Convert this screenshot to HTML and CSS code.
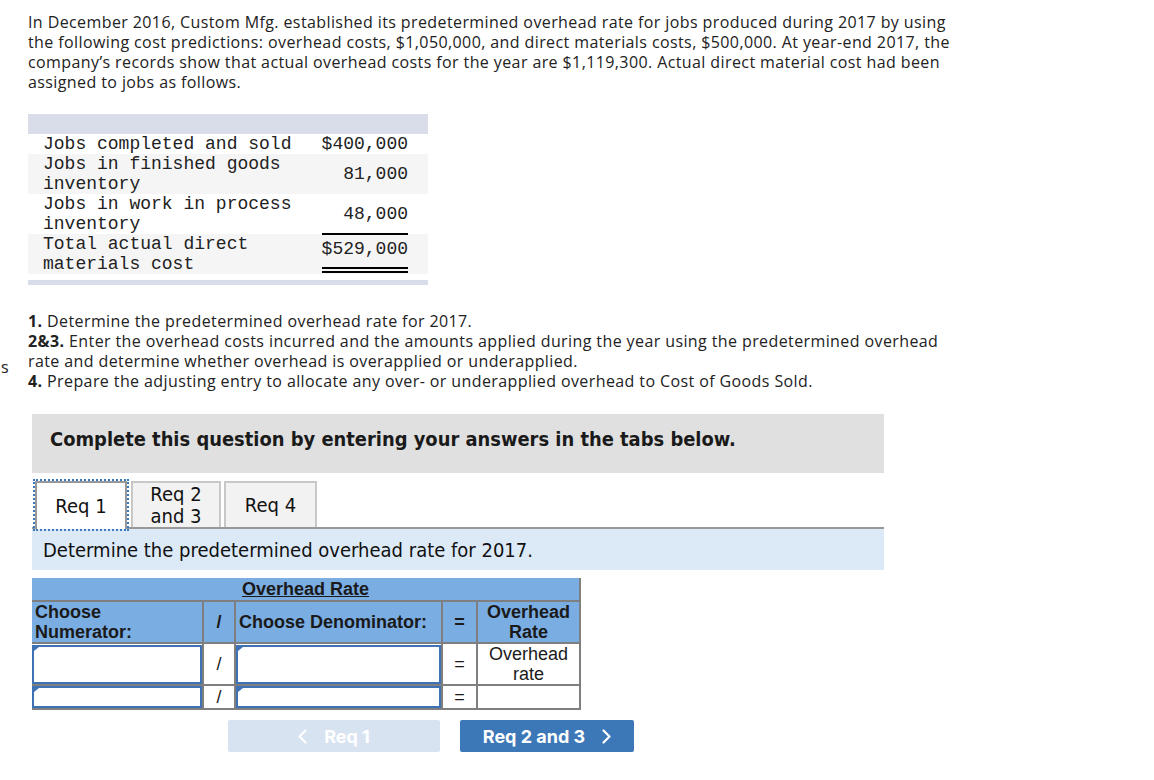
FILE: index.html
```html
<!DOCTYPE html>
<html lang="en">
<head>
<meta charset="utf-8">
<title>Predetermined overhead rate</title>
<link rel="stylesheet" href="styles.css">
</head>
<body>
<div class="page">
  <p class="intro">In December 2016, Custom Mfg. established its predetermined overhead rate for jobs produced during 2017 by using<br>the following cost predictions: overhead costs, $1,050,000, and direct materials costs, $500,000. At year-end 2017, the<br>company’s records show that actual overhead costs for the year are $1,119,300. Actual direct material cost had been<br>assigned to jobs as follows.</p>

  <table class="costs">
    <thead><tr><th colspan="2"></th></tr></thead>
    <tbody>
      <tr><td class="lbl">Jobs completed and sold</td><td class="val">$400,000</td></tr>
      <tr class="alt"><td class="lbl">Jobs in finished goods inventory</td><td class="val">81,000</td></tr>
      <tr><td class="lbl">Jobs in work in process inventory</td><td class="val">48,000</td></tr>
      <tr class="alt"><td class="lbl">Total actual direct materials cost</td><td class="val"><span class="total">$529,000</span></td></tr>
    </tbody>
    <tfoot><tr><td colspan="2"></td></tr></tfoot>
  </table>

  <div class="questions">
    <span class="stray">s</span>
    <div class="qtext">
      <p><b>1.</b> Determine the predetermined overhead rate for 2017.</p>
      <p><b>2&amp;3.</b> Enter the overhead costs incurred and the amounts applied during the year using the predetermined overhead<br>rate and determine whether overhead is overapplied or underapplied.</p>
      <p><b>4.</b> Prepare the adjusting entry to allocate any over- or underapplied overhead to Cost of Goods Sold.</p>
    </div>
  </div>

  <div class="quiz">
    <div class="prompt">Complete this question by entering your answers in the tabs below.</div>
    <div class="tabs">
      <div class="tab t1 active">Req 1</div>
      <div class="tab t2">Req 2<br>and 3</div>
      <div class="tab t3">Req 4</div>
    </div>
    <div class="instruction">Determine the predetermined overhead rate for 2017.</div>

    <table class="rate">
      <tr class="head"><th colspan="5"><u>Overhead Rate</u></th></tr>
      <tr class="cols">
        <th class="c1 left">Choose<br>Numerator:</th>
        <th class="c2">/</th>
        <th class="c3 left">Choose Denominator:</th>
        <th class="c4">=</th>
        <th class="c5">Overhead<br>Rate</th>
      </tr>
      <tr class="r1">
        <td class="in"><div class="box"></div></td>
        <td>/</td>
        <td class="in"><div class="box"></div></td>
        <td>=</td>
        <td>Overhead<br>rate</td>
      </tr>
      <tr class="r2">
        <td class="in"><div class="box"></div></td>
        <td>/</td>
        <td class="in"><div class="box"></div></td>
        <td>=</td>
        <td></td>
      </tr>
    </table>

    <div class="nav">
      <button class="btn prev"><svg class="chev" width="9" height="15" viewBox="0 0 9 15"><path d="M7.5 1.5 L1.5 7.5 L7.5 13.5" fill="none" stroke="#fff" stroke-width="2.2" stroke-linecap="round" stroke-linejoin="round"/></svg>Req 1</button>
      <button class="btn next">Req 2 and 3<svg class="chev" width="9" height="15" viewBox="0 0 9 15"><path d="M1.5 1.5 L7.5 7.5 L1.5 13.5" fill="none" stroke="#fff" stroke-width="2.2" stroke-linecap="round" stroke-linejoin="round"/></svg></button>
    </div>
  </div>
</div>
</body>
</html>
```

FILE: styles.css
```css
body {
  margin: 0;
  background: #ffffff;
  color: #1f1f1f;
}
.page {
  width: 1154px;
}
.intro {
  margin: 12px 0 0 28px;
  font-family: "Open Sans", "Liberation Sans", sans-serif;
  font-size: 16px;
  letter-spacing: 0.4px;
  line-height: 20px;
  color: #222;
}

/* cost table */
.costs {
  margin: 22px 0 0 28px;
  width: 400px;
  border-collapse: separate;
  border-spacing: 0;
  font-family: "Liberation Mono", monospace;
  font-size: 18px;
  line-height: 20px;
  color: #222;
}
.costs thead th {
  height: 20px;
  padding: 0;
  background: #d9dde9;
}
.costs td {
  padding: 0;
  vertical-align: middle;
}
.costs .lbl {
  width: 257px;
  padding-left: 15px;
}
.costs .val {
  text-align: right;
  padding-right: 20px;
}
.costs .alt td {
  background: #f5f5f5;
}
.costs .total {
  display: inline-block;
  border-top: 2px solid #000;
  border-bottom: 6px double #000;
  padding: 4px 0 8px;
  margin-top: -2px;
}
.costs tfoot td {
  height: 6px;
  border-bottom: 5px solid #d9dde9;
}

/* questions */
.questions {
  display: grid;
  grid-template-columns: 28px auto;
  margin-top: 26px;
  font-family: "Open Sans", "Liberation Sans", sans-serif;
  font-size: 16px;
  letter-spacing: 0.4px;
  line-height: 20px;
  color: #222;
}
.stray {
  padding: 46px 0 0 1px;
}
.qtext p {
  margin: 0;
}

/* quiz */
.quiz {
  margin: 23px 0 0 32px;
  width: 852px;
}
.prompt {
  height: 59px;
  box-sizing: border-box;
  padding: 14px 0 0 18px;
  background: #e0e0e0;
  font-family: "DejaVu Sans Condensed", "DejaVu Sans", sans-serif;
  font-weight: bold;
  font-size: 19.9px;
  line-height: 24px;
  color: #1a1a1a;
}
.tabs {
  display: flex;
  margin-top: 8px;
  padding-left: 3px;
  border-bottom: 2px solid #999;
}
.tab {
  height: 46px;
  box-sizing: border-box;
  display: flex;
  align-items: center;
  justify-content: center;
  text-align: center;
  background: #f2f2f2;
  border: 2px solid #c8c8c8;
  border-bottom: none;
  font-family: "DejaVu Sans Condensed", "DejaVu Sans", sans-serif;
  font-size: 20px;
  line-height: 22px;
  color: #111;
}
.tab.t1 { width: 92px; }
.tab.t2 { width: 90px; margin-left: 4px; }
.tab.t3 { width: 93px; margin-left: 3px; }
.tab.active {
  background: #fff;
  border-color: #999;
  height: 48px;
  margin-bottom: -2px;
  outline: 2px dotted #3a78c0;
  outline-offset: 0;
}
.instruction {
  height: 41px;
  box-sizing: border-box;
  padding: 9px 0 0 11px;
  background: #dceaf8;
  font-family: "DejaVu Sans Condensed", "DejaVu Sans", sans-serif;
  font-size: 20px;
  line-height: 24px;
  color: #111;
}

/* overhead rate table */
.rate {
  margin-top: 8px;
  width: 549px;
  border-collapse: collapse;
  font-family: "Liberation Sans", Arial, sans-serif;
  font-size: 18px;
  line-height: 20px;
  color: #1a1a1a;
}
.rate th,
.rate td {
  border: 2px solid #7f7f7f;
  padding: 0;
  text-align: center;
  vertical-align: middle;
}
.rate tr > :first-child {
  border-left: none;
}
.rate .head th {
  border-top: none;
  height: 22px;
  background: #7aade2;
}
.rate .cols th {
  height: 40px;
  background: #7aade2;
}
.rate .left {
  text-align: left;
  padding-left: 3px;
}
.rate .c1 { width: 167px; }
.rate .c2 { width: 30px; }
.rate .c3 { width: 202px; }
.rate .c4 { width: 33px; }
.rate .r1 td { height: 39px; }
.rate .r2 td { height: 22px; }
.box {
  box-sizing: border-box;
  border: 2px solid #3f72b4;
  background: #fff;
  position: relative;
}
.r1 .box { height: 39px; }
.r2 .box { height: 22px; }
.box::before {
  content: "";
  position: absolute;
  left: 0;
  top: 0;
  border-left: 5px solid #3f72b4;
  border-bottom: 4px solid transparent;
}

/* nav */
.nav {
  display: flex;
  gap: 20px;
  margin-top: 10px;
  padding-left: 196px;
}
.btn {
  height: 32px;
  border: none;
  border-radius: 2px;
  color: #fff;
  font-family: "Inter", "Roboto", sans-serif;
  font-weight: 700;
  font-size: 18px;
  display: flex;
  align-items: center;
  justify-content: center;
  gap: 17px;
  padding: 0;
}
.btn.prev {
  width: 212px;
  background: #d8e3f1;
}
.btn.next {
  width: 174px;
  background: #3c78b8;
}
.chev {
  display: block;
}
```
